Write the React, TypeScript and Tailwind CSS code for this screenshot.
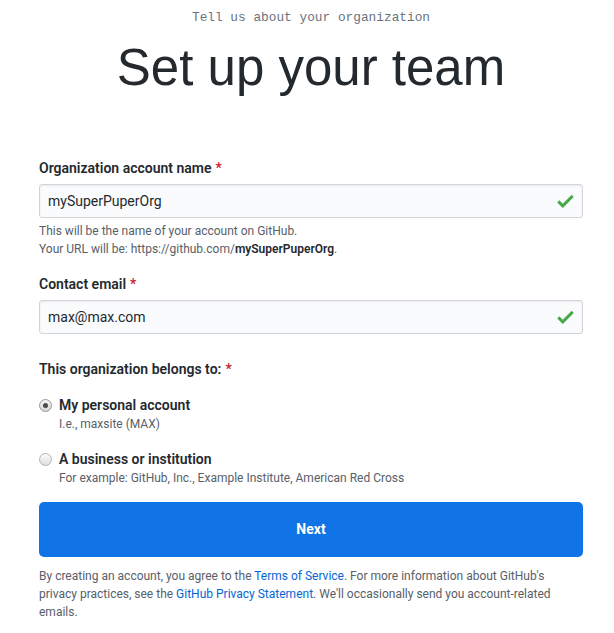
function Check() {
  return (
    <svg viewBox="0 0 12 16" width="17" height="22" className="fill-[#48a947]">
      <path d="M12 5l-8 8-4-4 1.5-1.5L4 10l6.5-6.5L12 5z" />
    </svg>
  );
}

function Req() {
  return <span className="text-[#cb2431] ml-1">*</span>;
}

function Field({ value }: { value: string }) {
  return (
    <div className="h-[34px] flex items-center justify-between rounded-[3px] border border-[#d1d5da] bg-[#fafbfc] shadow-[inset_0_1px_2px_rgba(27,31,35,0.075)] pl-2 pr-2">
      <span className="text-[14px] text-[#24292e]">{value}</span>
      <Check />
    </div>
  );
}

function Radio({ checked }: { checked: boolean }) {
  return (
    <span
      className={
        checked
          ? "w-[13px] h-[13px] rounded-full border border-[#9a9a9a] bg-gradient-to-b from-[#f4f4f4] to-[#d6d6d6] flex items-center justify-center shrink-0"
          : "w-[13px] h-[13px] rounded-full border border-[#b4b4b4] bg-gradient-to-b from-[#fbfbfb] to-[#dedede] flex items-center justify-center shrink-0"
      }
    >
      {checked && <span className="w-[5px] h-[5px] rounded-full bg-[#4a4a4a]" />}
    </span>
  );
}

function Option({ checked, title, sub }: { checked: boolean; title: string; sub: string }) {
  return (
    <div className="flex">
      <div className="h-5 flex items-center">
        <Radio checked={checked} />
      </div>
      <div className="ml-[7px]">
        <div className="text-[14px] leading-5 font-semibold text-[#24292e]">{title}</div>
        <div className="text-[12px] leading-[18px] text-[#586069]">{sub}</div>
      </div>
    </div>
  );
}

export default function App() {
  return (
    <div className="min-h-[633px] bg-white pl-[39px] pr-[31px] pt-2 font-[Roboto,sans-serif] text-[#24292e]">
      <div className="text-center font-['Liberation_Mono',monospace] text-[12.8px] leading-5 text-[#6a737d]">
        Tell us about your organization
      </div>
      <h1 className="mt-[14px] text-center font-['Liberation_Sans',Arial,sans-serif] text-[51px] leading-[51px] text-[#24292e]">
        Set up your team
      </h1>

      <div className="mt-[65px]">
        <label className="block text-[14px] leading-5 font-semibold">
          Organization account name
          <Req />
        </label>
        <div className="mt-1.5">
          <Field value="mySuperPuperOrg" />
        </div>
        <p className="mt-1 text-[12px] leading-[18px] text-[#586069]">
          This will be the name of your account on GitHub.
          <br />
          Your URL will be: https://github.com/<strong className="font-semibold text-[#24292e]">mySuperPuperOrg</strong>.
        </p>
      </div>

      <div className="mt-4">
        <label className="block text-[14px] leading-5 font-semibold">
          Contact email
          <Req />
        </label>
        <div className="mt-1.5">
          <Field value="max@max.com" />
        </div>
      </div>

      <div className="mt-[25px]">
        <div className="text-[14px] leading-5 font-semibold">
          This organization belongs to:
          <Req />
        </div>
        <div className="mt-4 flex flex-col gap-4">
          <Option checked title="My personal account" sub="I.e., maxsite (MAX)" />
          <Option checked={false} title="A business or institution" sub="For example: GitHub, Inc., Example Institute, American Red Cross" />
        </div>
      </div>

      <button className="mt-[15px] w-full h-[55px] rounded-[5px] bg-[#1174e6] text-white text-[14px] font-bold">
        Next
      </button>

      <p className="mt-[10px] text-[12px] leading-[18px] text-[#586069]">
        By creating an account, you agree to the <a className="text-[#0366d6]">Terms of Service</a>. For more information about GitHub's privacy practices, see the <a className="text-[#0366d6]">GitHub Privacy Statement</a>. We'll occasionally send you account-related emails.
      </p>
    </div>
  );
}
